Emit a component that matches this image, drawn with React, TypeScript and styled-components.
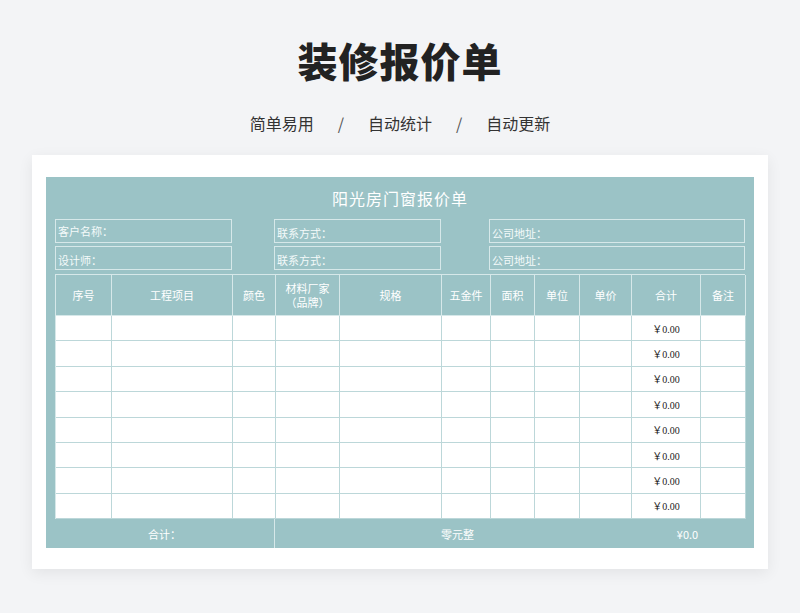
import React from "react";
import styled, { createGlobalStyle } from "styled-components";

const G = createGlobalStyle`
  body{margin:0;background:#f3f4f6;font-family:"Noto Sans CJK SC","Noto Sans",sans-serif;}
`;
const Page = styled.div`width:800px;height:613px;display:flex;flex-direction:column;align-items:center;`;
const H1 = styled.h1`margin:33px 0 0;font-size:40px;line-height:54px;font-weight:900;color:#222;letter-spacing:1px;`;
const Sub = styled.div`margin-top:24px;font-size:16px;color:#333;display:flex;gap:20px;line-height:24px;`;
const Slash = styled.span`margin:0 4px;color:#555;`;
const Card = styled.div`margin-top:20px;width:736px;height:414px;background:#fff;box-shadow:0 4px 14px rgba(0,0,0,0.07);padding:22px 14px 0;box-sizing:border-box;`;
const Panel = styled.div`background:#9bc3c6;height:371px;padding:0 9px;box-sizing:border-box;color:#fff;display:flex;flex-direction:column;`;
const Title = styled.div`height:42px;display:flex;align-items:center;justify-content:center;font-size:16px;letter-spacing:1px;`;
const Info = styled.div`display:grid;grid-template-columns:177px 42px 167px 48px 256px;row-gap:3px;`;
const Box = styled.div<{ $col: number; $top?: boolean }>`
  grid-column:${p => p.$col};height:24px;border:1px solid #d6e8e9;box-sizing:border-box;
  font-size:11px;display:flex;align-items:${p => (p.$top ? "center" : "flex-end")};padding:0 2px 1px;color:#f4fafa;
`;
const cols = "56px 121px 43px 64px 102px 49px 44px 45px 52px 69px 45px";
const Table = styled.div`margin-top:4px;display:grid;grid-template-columns:${cols};border-left:1px solid #d6e8e9;border-top:1px solid #d6e8e9;`;
const Th = styled.div`height:41px;border-right:1px solid #d6e8e9;border-bottom:1px solid #d6e8e9;box-sizing:border-box;display:flex;align-items:center;justify-content:center;text-align:center;font-size:11px;line-height:14px;white-space:pre-line;`;
const Td = styled.div`height:25.4px;background:#fff;border-right:1px solid #bcd7d9;border-bottom:1px solid #bcd7d9;box-sizing:border-box;display:flex;align-items:center;justify-content:center;font-size:10px;color:#222;font-family:"Liberation Serif","Noto Sans CJK SC",serif;`;
const Foot = styled.div`flex:1;display:grid;grid-template-columns:219px 1px 1fr 1fr;align-items:center;font-size:11px;`;
const Div = styled.div`align-self:stretch;background:#d6e8e9;`;
const Center = styled.div<{ $pl?: number }>`text-align:center;padding-left:${p => p.$pl ?? 0}px;`;

const heads = ["序号", "工程项目", "颜色", "材料厂家\n（品牌）", "规格", "五金件", "面积", "单位", "单价", "合计", "备注"];

export default function App() {
  return (
    <Page>
      <G />
      <H1>装修报价单</H1>
      <Sub>简单易用<Slash>/</Slash>自动统计<Slash>/</Slash>自动更新</Sub>
      <Card>
        <Panel>
          <Title>阳光房门窗报价单</Title>
          <Info>
            <Box $col={1} $top>客户名称：</Box>
            <Box $col={3}>联系方式：</Box>
            <Box $col={5}>公司地址：</Box>
            <Box $col={1}>设计师：</Box>
            <Box $col={3}>联系方式：</Box>
            <Box $col={5}>公司地址：</Box>
          </Info>
          <Table>
            {heads.map(h => (
              <Th key={h}>{h}</Th>
            ))}
            {Array.from({ length: 8 }).flatMap((_, r) =>
              heads.map((h, c) => <Td key={r + "-" + c}>{c === 9 ? "￥0.00" : ""}</Td>)
            )}
          </Table>
          <Foot>
            <Center>合计：</Center>
            <Div />
            <Center $pl={130}>零元整</Center>
            <Center $pl={120}>¥0.0</Center>
          </Foot>
        </Panel>
      </Card>
    </Page>
  );
}
